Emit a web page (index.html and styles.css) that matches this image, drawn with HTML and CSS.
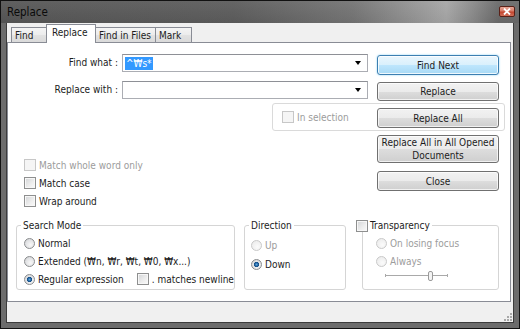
FILE: index.html
```html
<!DOCTYPE html>
<html>
<head>
<meta charset="utf-8">
<link rel="stylesheet" href="styles.css">
</head>
<body>
<div class="window">
  <div class="titlebar">
    <span class="title">Replace</span>
    <span class="close"><svg width="8" height="7" viewBox="0 0 8 7"><path d="M1 0.5 L7 6.5 M7 0.5 L1 6.5" stroke="#fff" stroke-width="1.8"/></svg></span>
  </div>
  <div class="client">
    <div class="tabs">
      <div class="tab t-find">Find</div>
      <div class="tab active t-replace">Replace</div>
      <div class="tab t-files">Find in Files</div>
      <div class="tab t-mark">Mark</div>
    </div>
    <div class="panel">
      <div class="top-grid">
        <div class="lbl lbl1">Find what :</div>
        <div class="combo combo1"><span class="sel">^₩s*</span><span class="arrow"></span></div>
        <div class="btn default b-find">Find Next</div>
        <div class="lbl lbl2">Replace with :</div>
        <div class="combo combo2"><span class="arrow"></span></div>
        <div class="btn b-replace">Replace</div>
        <div class="selbox"><span class="check disabled"></span><span class="dis">In selection</span></div>
        <div class="btn b-all">Replace All</div>
      </div>
      <div class="middle">
        <div class="opts">
          <div class="opt dis"><span class="check disabled"></span>Match whole word only</div>
          <div class="opt"><span class="check"></span>Match case</div>
          <div class="opt"><span class="check"></span>Wrap around</div>
        </div>
        <div class="btncol">
          <div class="btn tall">Replace All in All Opened<br>Documents</div>
          <div class="btn b-close">Close</div>
        </div>
      </div>
      <div class="groups">
        <fieldset class="grp g-mode">
          <legend>Search Mode</legend>
          <div class="row"><span class="radio"></span>Normal</div>
          <div class="row"><span class="radio"></span>Extended (₩n, ₩r, ₩t, ₩0, ₩x...)</div>
          <div class="row"><span class="radio on"></span>Regular expression<span class="check nl"></span>. matches newline</div>
        </fieldset>
        <fieldset class="grp g-dir">
          <legend>Direction</legend>
          <div class="row dis"><span class="radio disabled"></span>Up</div>
          <div class="row"><span class="radio on"></span>Down</div>
        </fieldset>
        <fieldset class="grp g-trans">
          <legend><span class="check"></span>Transparency</legend>
          <div class="row dis"><span class="radio disabled"></span>On losing focus</div>
          <div class="row dis"><span class="radio disabled"></span>Always</div>
          <div class="slider"><span class="track"></span><span class="thumb"></span></div>
        </fieldset>
      </div>
    </div>
    <div class="status">
      <svg class="grip" width="8" height="8" viewBox="0 0 8 8">
        <g fill="#a8a8a8">
          <rect x="6" y="0" width="2" height="2"/>
          <rect x="3" y="3" width="2" height="2"/><rect x="6" y="3" width="2" height="2"/>
          <rect x="0" y="6" width="2" height="2"/><rect x="3" y="6" width="2" height="2"/><rect x="6" y="6" width="2" height="2"/>
        </g>
      </svg>
    </div>
  </div>
</div>
</body>
</html>
```

FILE: styles.css
```css
* { box-sizing: border-box; }
html, body { margin: 0; padding: 0; }
body {
  width: 520px;
  height: 329px;
  overflow: hidden;
  background: #6a6a6a;
  font-family: "DejaVu Sans Condensed", "Liberation Sans", sans-serif;
  font-size: 10px;
  color: #1c1c1c;
}
.window {
  width: 520px;
  height: 329px;
  border: 1px solid #111;
  background: #6c6c6c;
  display: flex;
  flex-direction: column;
}
.titlebar {
  height: 22px;
  flex: none;
  display: flex;
  align-items: center;
  padding: 0 4px 0 6px;
  background:
    linear-gradient(to bottom, rgba(255,255,255,0.06), rgba(0,0,0,0.04)),
    linear-gradient(to right, #565656 0%, #5c5c5c 45%, #747474 68%, #a6a6a6 86%, #8a8a8a 91%, #6a6a6a 96%, #6a6a6a 100%);
}
.title {
  flex: 1;
  font-family: "DejaVu Sans Condensed", "Liberation Sans", sans-serif;
  font-size: 11.5px;
  color: #0a0a0a;
}
.close {
  align-self: flex-start;
  margin-top: 5px;
  width: 16px;
  height: 11px;
  border: 1px solid #5a2118;
  border-radius: 2px;
  background: linear-gradient(#e6a697 0%, #d77a66 45%, #c2432c 55%, #d2705a 100%);
  display: flex;
  align-items: center;
  justify-content: center;
}
.client {
  flex: 1;
  margin: 0 5px 5px;
  border: 1px solid #3c3c3c;
  border-top: none;
  background: #f0f0f0;
  display: flex;
  flex-direction: column;
}
.tabs {
  height: 19px;
  flex: none;
  display: flex;
  align-items: flex-end;
  padding-left: 4px;
}
.tab {
  height: 15px;
  border: 1px solid #898c95;
  border-bottom: none;
  background: linear-gradient(#f4f4f4 0%, #ececec 50%, #e2e2e2 51%, #dadada 100%);
  display: flex;
  align-items: center;
  padding-left: 3px;
  white-space: nowrap;
}
.tab + .tab { margin-left: -1px; }
.t-find { width: 36px; }
.t-replace { width: 50px; }
.t-files { width: 61px; }
.t-mark { width: 37px; }
.tab.active {
  height: 19px;
  margin-bottom: -1px;
  background: #fff;
  position: relative;
  z-index: 1;
  padding-left: 5px;
  padding-bottom: 3px;
}
.panel {
  width: 504px;
  height: 260px;
  flex: none;
  border: 1px solid #898c95;
  background: #fff;
}
.top-grid {
  display: grid;
  grid-template-columns: 110px 4px 150px 96px 9px 122px 6px;
  grid-template-rows: 27px 22px 28px;
  margin-top: 11px;
}
.lbl {
  grid-column: 1;
  text-align: right;
  line-height: 18px;
  white-space: nowrap;
}
.lbl1 { grid-row: 1; }
.lbl2 { grid-row: 2; }
.combo {
  grid-column: 3 / 5;
  height: 18px;
  border: 1px solid #abadb3;
  border-top-color: #8e9096;
  background: #fff;
  display: flex;
  align-items: center;
  padding-left: 2px;
  position: relative;
}
.combo1 { grid-row: 1; }
.combo2 { grid-row: 2; }
.sel {
  background: #3399ff;
  color: #fff;
  line-height: 13px;
  padding: 0 1px;
}
.arrow {
  margin-left: auto;
  margin-right: 6px;
  width: 0;
  height: 0;
  border-left: 3.5px solid transparent;
  border-right: 3.5px solid transparent;
  border-top: 4px solid #000;
}
.btn {
  height: 20px;
  border: 1px solid #707070;
  border-radius: 3px;
  background: linear-gradient(#f2f2f2 0%, #ebebeb 50%, #dddddd 51%, #cfcfcf 100%);
  box-shadow: inset 0 0 0 1px rgba(255,255,255,0.7);
  display: flex;
  align-items: center;
  justify-content: center;
  text-align: center;
  line-height: 13px;
  white-space: nowrap;
}
.btn.default {
  border-color: #3c7fb1;
  background: linear-gradient(#eaf6fd 0%, #d9f0fc 50%, #bee6fd 51%, #a7d9f5 100%);
  box-shadow: inset 0 0 0 1px rgba(255,255,255,0.8), 0 0 2px #7ecdf4;
}
.b-find { grid-column: 6; grid-row: 1; margin-top: 1px; }
.b-replace { grid-column: 6; grid-row: 2; margin-top: 1px; height: 19px; }
.b-all { grid-column: 6; grid-row: 3; margin-top: 5px; }
.selbox {
  grid-column: 4 / 8;
  grid-row: 3;
  height: 28px;
  border: 1px solid #dadada;
  border-radius: 3px;
  display: flex;
  align-items: center;
  padding-left: 9px;
  gap: 3px;
}
.dis { color: #9c9c9c; }
.check {
  flex: none;
  display: inline-block;
  width: 12px;
  height: 12px;
  border: 1px solid #8e8f8f;
  background: linear-gradient(135deg, #d2d4d6 0%, #eeeeee 60%, #fafafa 100%);
  box-shadow: inset 0 0 0 1px #f7f7f7;
}
.check.disabled {
  border-color: #c7c7c7;
  background: #f5f5f5;
  box-shadow: none;
}
.middle {
  display: flex;
  height: 79px;
}
.opts {
  padding-left: 16px;
  margin-top: 25px;
}
.opt {
  height: 18px;
  display: flex;
  align-items: center;
  gap: 3px;
  white-space: nowrap;
}
.btncol {
  margin-left: auto;
  margin-right: 11px;
  width: 122px;
}
.btn.tall { height: 28px; margin-top: 4px; }
.b-close { margin-top: 8px; }
.groups {
  display: flex;
  margin-top: 9px;
  padding-left: 8px;
}
.grp {
  margin: 0;
  height: 71px;
  border: 1px solid #d5d5d5;
  border-radius: 3px;
  padding: 2px 0 0 4px;
  min-width: 0;
}
.grp legend {
  padding: 0 2px;
  line-height: 13px;
  white-space: nowrap;
}
.g-mode { width: 219px; }
.g-dir { width: 102px; margin-left: 9px; padding-top: 4px; }
.g-trans { width: 137px; margin-left: 16px; }
.g-trans legend {
  margin-left: -11px;
  display: flex;
  align-items: center;
  gap: 2px;
  padding: 0 2px 0 0;
}
.row {
  height: 18px;
  display: flex;
  align-items: center;
  gap: 3px;
  margin-left: 3px;
  white-space: nowrap;
}
.g-dir .row { height: 19px; margin-left: 2px; }
.g-trans .row { margin-left: 9px; }
.radio {
  flex: none;
  display: inline-block;
  width: 11px;
  height: 11px;
  border-radius: 50%;
  border: 1px solid #8a8c8e;
  background: radial-gradient(circle at 60% 65%, #f8f8f8 0%, #e2e3e5 55%, #c9cbce 100%);
}
.radio.disabled {
  border-color: #c9c9c9;
  background: radial-gradient(circle at 60% 65%, #fbfbfb 0%, #eeeeee 70%, #e2e2e2 100%);
}
.radio.on {
  background:
    radial-gradient(circle at 50% 50%, #5fa4d8 0%, #1b5f9e 28%, #0e3f72 42%, transparent 45%),
    radial-gradient(circle at 60% 65%, #f8f8f8 0%, #e2e3e5 55%, #c9cbce 100%);
}
.check.nl { margin-left: 10px; }
.slider {
  position: relative;
  height: 12px;
  width: 63px;
  margin-left: 18px;
}
.track {
  position: absolute;
  left: 0;
  right: 0;
  top: 5px;
  height: 1px;
  background: #a9a9a9;
}
.track::before, .track::after {
  content: "";
  position: absolute;
  top: -1px;
  width: 1px;
  height: 3px;
  background: #a9a9a9;
}
.track::before { left: 0; }
.track::after { right: 0; }
.thumb {
  position: absolute;
  left: 43px;
  top: 1px;
  width: 5px;
  height: 10px;
  border: 1px solid #9a9a9a;
  border-radius: 2px;
  background: #f4f4f4;
}
.status {
  height: 20px;
  flex: none;
  display: flex;
  justify-content: flex-end;
  align-items: flex-end;
  padding: 0 1px 1px 0;
}
.grip { display: block; }
```
